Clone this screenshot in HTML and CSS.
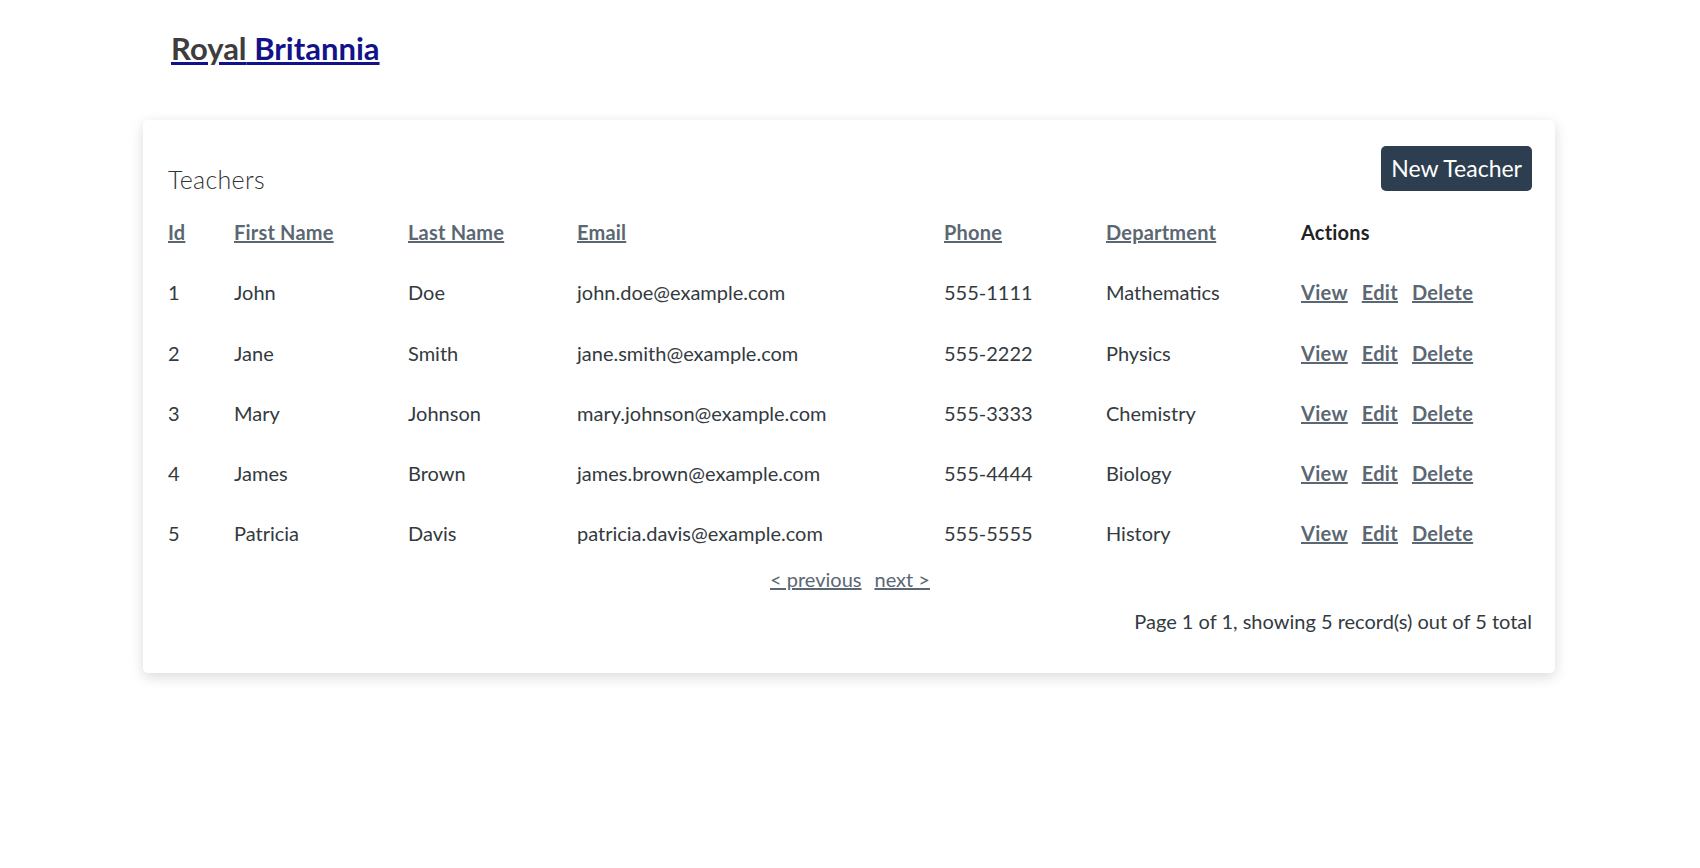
FILE: index.html
```html
<!DOCTYPE html>
<html lang="en">
<head>
<meta charset="utf-8">
<title>Teachers</title>
<link rel="stylesheet" href="styles.css">
</head>
<body>
<header class="site-header">
  <a class="brand" href="#"><span class="brand-first">Royal</span> Britannia</a>
</header>
<main class="card">
  <div class="card-top">
    <h2 class="card-title">Teachers</h2>
    <a class="btn" href="#">New Teacher</a>
  </div>
  <table class="list">
    <thead>
      <tr>
        <th class="c-id"><a href="#">Id</a></th>
        <th class="c-first"><a href="#">First Name</a></th>
        <th class="c-last"><a href="#">Last Name</a></th>
        <th class="c-email"><a href="#">Email</a></th>
        <th class="c-phone"><a href="#">Phone</a></th>
        <th class="c-dept"><a href="#">Department</a></th>
        <th class="c-actions">Actions</th>
      </tr>
    </thead>
    <tbody>
      <tr><td>1</td><td>John</td><td>Doe</td><td>john.doe@example.com</td><td>555-1111</td><td>Mathematics</td><td class="acts"><a href="#">View</a><a href="#">Edit</a><a href="#">Delete</a></td></tr>
      <tr><td>2</td><td>Jane</td><td>Smith</td><td>jane.smith@example.com</td><td>555-2222</td><td>Physics</td><td class="acts"><a href="#">View</a><a href="#">Edit</a><a href="#">Delete</a></td></tr>
      <tr><td>3</td><td>Mary</td><td>Johnson</td><td>mary.johnson@example.com</td><td>555-3333</td><td>Chemistry</td><td class="acts"><a href="#">View</a><a href="#">Edit</a><a href="#">Delete</a></td></tr>
      <tr><td>4</td><td>James</td><td>Brown</td><td>james.brown@example.com</td><td>555-4444</td><td>Biology</td><td class="acts"><a href="#">View</a><a href="#">Edit</a><a href="#">Delete</a></td></tr>
      <tr><td>5</td><td>Patricia</td><td>Davis</td><td>patricia.davis@example.com</td><td>555-5555</td><td>History</td><td class="acts"><a href="#">View</a><a href="#">Edit</a><a href="#">Delete</a></td></tr>
    </tbody>
  </table>
  <div class="paginator">
    <a href="#">&lt; previous</a>
    <a href="#">next &gt;</a>
  </div>
  <p class="counter">Page 1 of 1, showing 5 record(s) out of 5 total</p>
</main>
</body>
</html>
```
FILE: styles.css
```css
* { box-sizing: border-box; }
html, body { margin: 0; padding: 0; background: #fff; }
body {
  font-family: Lato, "Liberation Sans", sans-serif;
  color: #333a40;
  font-size: 20px;
  padding-bottom: 60px;
}
.site-header {
  height: 120px;
  padding: 29px 0 0 171px;
}
.brand {
  font-size: 31px;
  font-weight: 700;
  line-height: 38px;
  color: #12128a;
  text-decoration: underline;
}
.brand-first { color: #3d3d3d; }
.card {
  display: block;
  width: 1412px;
  margin: 0 0 40px 143px;
  background: #fff;
  border-radius: 5px;
  box-shadow: 0 4px 14px rgba(0, 0, 0, 0.15);
  padding: 26px 23px 37px 25px;
}
.card-top {
  display: flex;
  justify-content: space-between;
  align-items: flex-start;
  height: 56px;
}
.card-title {
  margin: 18px 0 0 0;
  font-family: Lato, sans-serif;
  font-weight: 300;
  font-size: 25px;
  line-height: 30px;
  letter-spacing: 0.3px;
  color: #333;
}
.btn {
  display: inline-block;
  background: #2d3e50;
  color: #fff;
  text-decoration: none;
  font-size: 23px;
  line-height: 45px;
  height: 45px;
  padding: 0 10px;
  border-radius: 5px;
}
.list {
  width: 100%;
  border-collapse: collapse;
  table-layout: fixed;
}
.list th, .list td {
  padding: 0;
  height: 60.25px;
  text-align: left;
  vertical-align: middle;
  white-space: nowrap;
  line-height: 24px;
}
.list th { font-weight: 700; color: #222; letter-spacing: 0.2px; }
.list a { color: #5b6772; text-decoration: underline; }
.list th a { font-weight: 700; }
.c-id { width: 66px; }
.c-first { width: 174px; }
.c-last { width: 169px; }
.c-email { width: 367px; }
.c-phone { width: 162px; }
.c-dept { width: 195px; }
.c-actions { width: auto; }
.acts a { font-weight: 700; margin-right: 14px; letter-spacing: 0.3px; }
.paginator {
  display: flex;
  justify-content: center;
  gap: 13px;
  line-height: 30px;
}
.paginator a { color: #5b6772; text-decoration: underline; }
.counter {
  margin: 12px 0 0 0;
  text-align: right;
  line-height: 30px;
}
```
